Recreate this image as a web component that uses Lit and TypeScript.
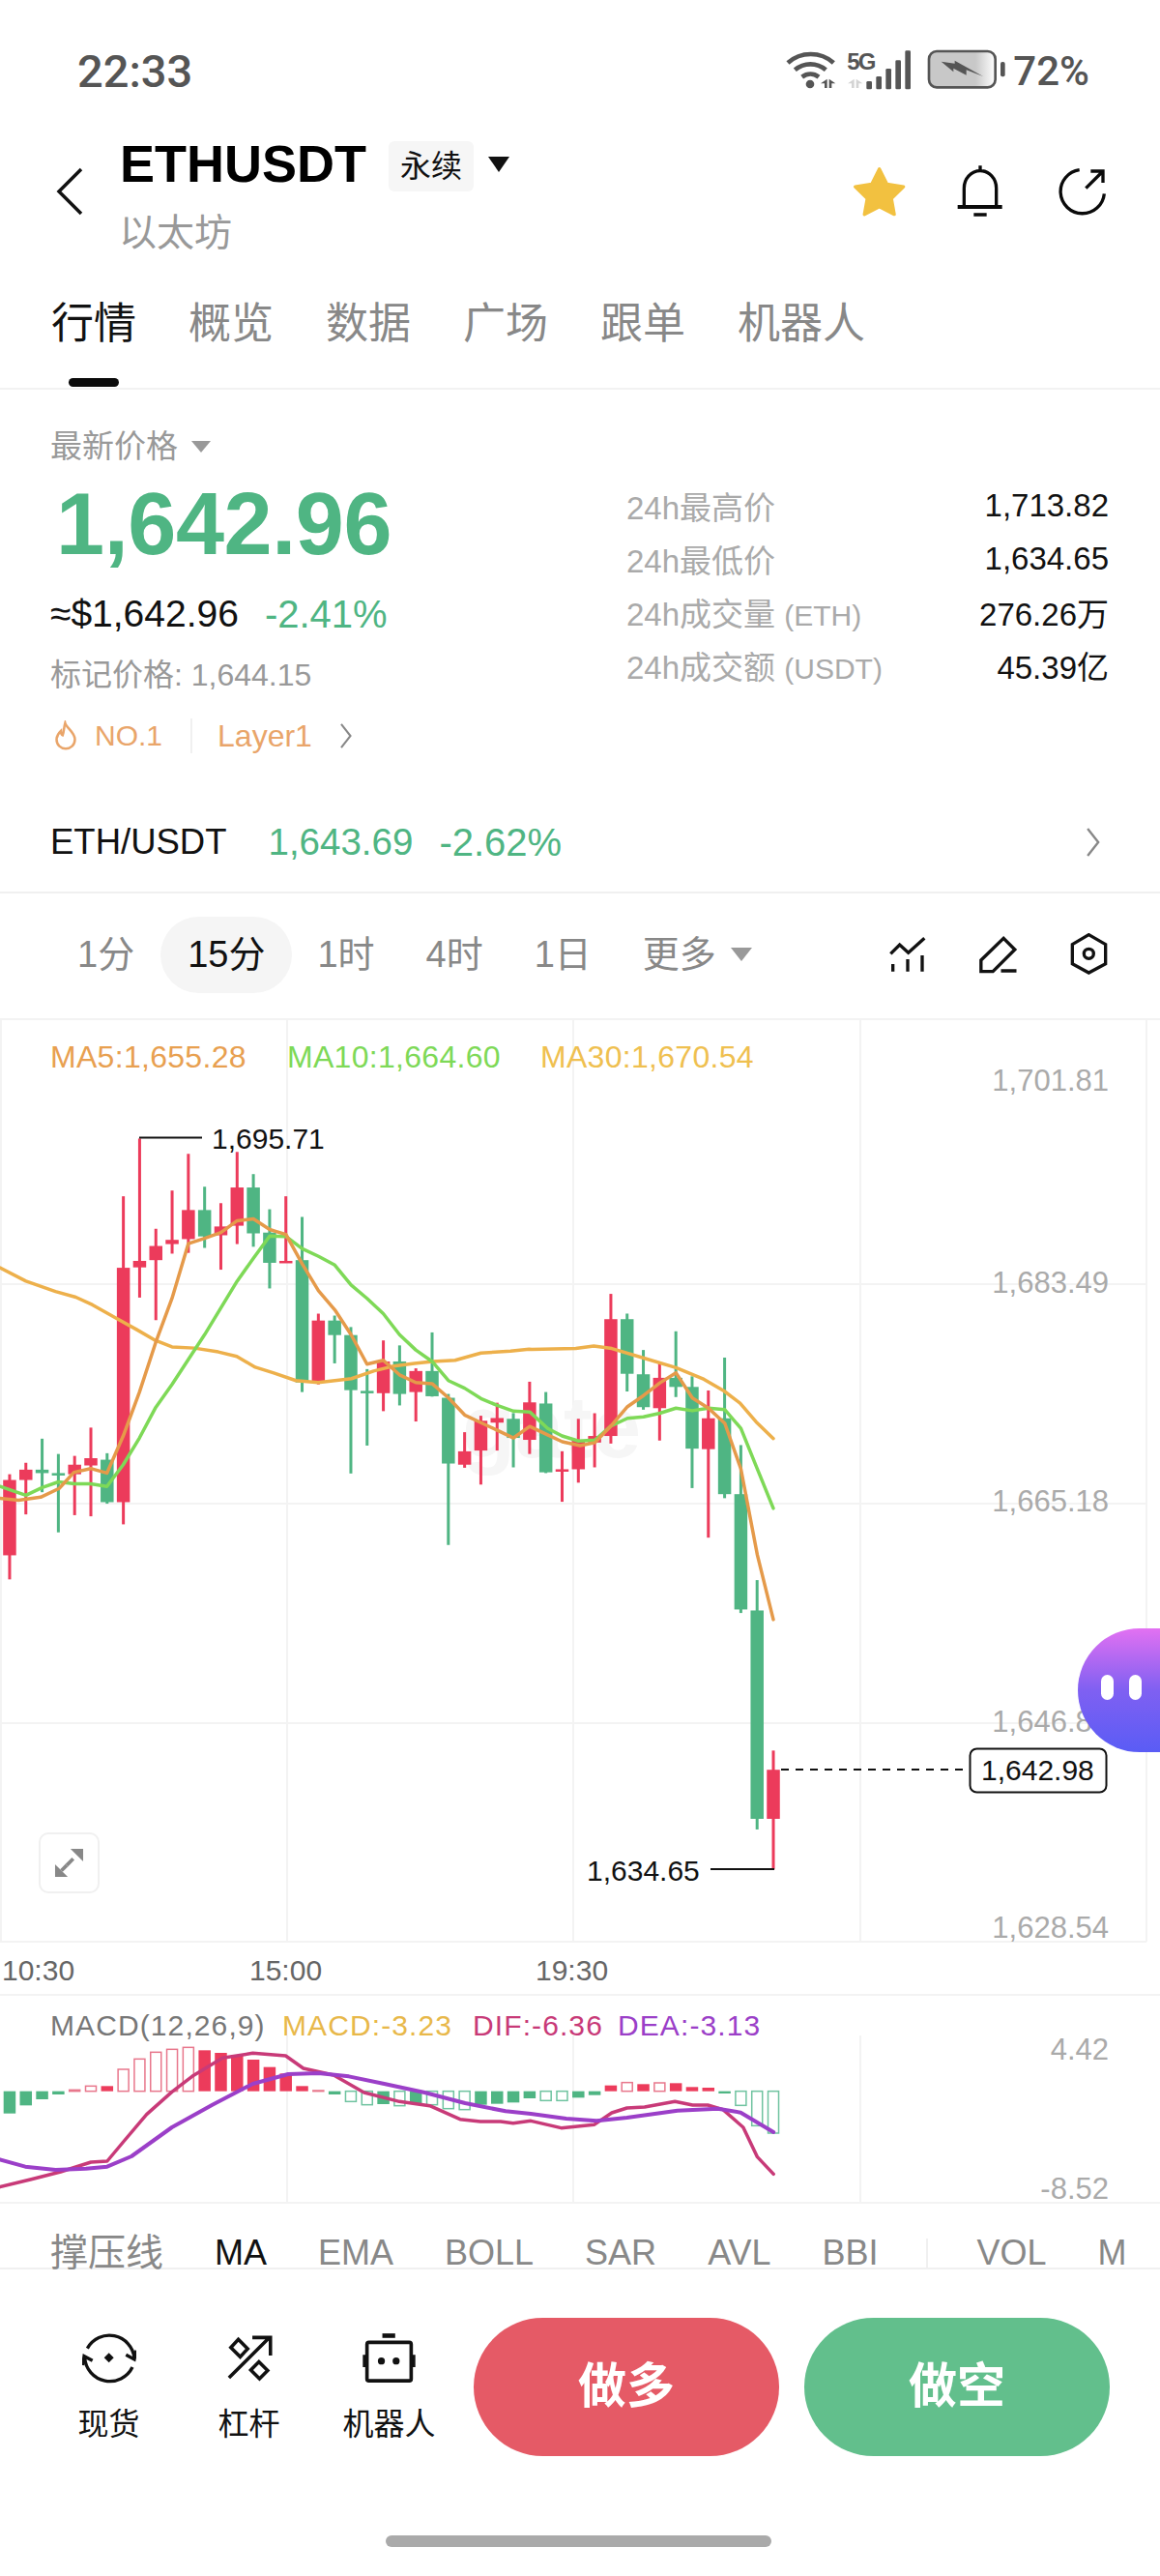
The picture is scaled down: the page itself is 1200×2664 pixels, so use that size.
import {LitElement, css, html, svg} from 'lit';
import {customElement} from 'lit/decorators.js';

const RED = '#ec3b5b';
const GREEN = '#4fb583';

// candles were traced off two crops with different scales, so each set has its own mapping to page px
const ax = (x: number) => x / 2.613;
const ay = (y: number) => 1060 + y / 2.529;
const bx = (x: number) => 550 + x / 2.412;
const by = (y: number) => 1200 + y / 1.912;
const candleX = (i: number) => 9.95 + i * 16.81;

// wick top, wick bottom, body top, body bottom, up?
type Candle = [number, number, number, number, boolean];

const candlesA: Candle[] = [
  [1175, 1450, 1190, 1387, true], [1145, 1280, 1163, 1190, true], [1082, 1222, 1163, 1172, false],
  [1122, 1327, 1172, 1178, false], [1127, 1282, 1150, 1175, true], [1053, 1285, 1133, 1152, true],
  [1120, 1252, 1137, 1248, false], [448, 1306, 635, 1248, true], [297, 713, 617, 634, true],
  [533, 772, 578, 615, true], [433, 598, 562, 573, true], [337, 596, 484, 560, true],
  [423, 583, 484, 553, false], [466, 640, 527, 550, true], [332, 573, 425, 525, true],
  [390, 580, 425, 545, false], [482, 689, 543, 622, false], [448, 622, 617, 622, true],
  [502, 960, 615, 935, false], [755, 940, 773, 932, true], [760, 885, 773, 811, false],
  [790, 1173, 811, 955, false], [900, 1100, 957, 962, false], [825, 1010, 880, 963, true],
  [838, 995, 880, 965, false], [898, 1037, 905, 960, true], [804, 972, 905, 971, false],
  [965, 1360, 975, 1147, false], [1065, 1158, 1115, 1150, true], [1022, 1202, 1035, 1113, true],
  [988, 1113, 1028, 1040, true], [1015, 1157, 1030, 1080, false], [933, 1122, 987, 1085, true],
  [960, 1172, 990, 1170, false], [1115, 1247, 1162, 1168, true], [1030, 1197, 1085, 1162, true],
];
const candlesB: Candle[] = [
  [500, 607, 545, 558, true], [264, 560, 314, 545, true], [303, 457, 314, 422, false],
  [375, 493, 423, 488, false], [400, 554, 430, 490, true], [338, 468, 430, 448, false],
  [427, 648, 448, 570, false], [455, 746, 510, 571, true], [390, 668, 510, 660, false],
  [563, 895, 660, 888, false], [830, 1323, 890, 1302, false], [1167, 1402, 1205, 1302, true],
];

const candles: Candle[] = [
  ...candlesA.map(c => [ay(c[0]), ay(c[1]), ay(c[2]), ay(c[3]), c[4]] as Candle),
  ...candlesB.map(c => [by(c[0]), by(c[1]), by(c[2]), by(c[3]), c[4]] as Candle),
];

const trace = (a: number[][], b: number[][]) =>
  [...a.map(p => `${ax(p[0])},${ay(p[1])}`), ...b.map(p => `${bx(p[0])},${by(p[1])}`)].join(' ');

const ma30 = trace(
  [[0,635],[70,670],[150,697],[205,712],[250,732],[320,770],[370,797],[420,825],[465,842],[525,845],[590,855],[640,867],[690,895],[740,910],[800,930],[860,935],[950,925],[1010,905],[1060,893],[1120,885],[1170,880],[1230,877],[1300,858],[1380,853],[1430,848]],
  [[0,374],[110,372],[155,367],[200,372],[280,391],[360,410],[430,433],[480,456],[520,480],[560,517],[603,550]],
);
const ma5 = trace(
  [[0,1238],[50,1243],[110,1235],[160,1212],[200,1170],[245,1160],[289,1172],[333,1075],[377,960],[421,830],[465,715],[509,572],[553,558],[597,543],[641,512],[685,507],[729,535],[773,548],[817,625],[861,695],[905,745],[949,810],[992,887],[1036,877],[1080,915],[1124,935],[1168,938],[1212,975],[1256,1020],[1300,1040],[1344,1060],[1388,1080],[1432,1050],[1476,1070],[1520,1090],[1568,1100]],
  [[158,558],[198,525],[239,487],[279,465],[320,440],[360,420],[401,470],[441,490],[482,520],[522,610],[563,780],[603,908]],
);
const ma10 = trace(
  [[0,1207],[70,1230],[114,1210],[158,1195],[202,1200],[245,1200],[289,1207],[333,1150],[377,1080],[421,1000],[465,940],[509,875],[553,810],[597,740],[641,670],[685,610],[729,552],[773,553],[817,585],[861,605],[905,628],[949,680],[992,715],[1036,755],[1080,810],[1124,850],[1168,880],[1212,930],[1256,950],[1300,977],[1344,995],[1388,1010],[1432,1012]],
  [[40,530],[76,545],[117,555],[158,553],[198,525],[239,510],[279,507],[320,500],[360,490],[401,495],[441,490],[482,493],[522,530],[563,610],[603,688]],
);

// macd crop: x / 1.912, 2060 + y / 3, zero line at 308
const mx = (x: number) => x / 1.912;
const my = (y: number) => 2060 + y / 3;
const macdBars: [number, boolean][] = [
  [377,false],[352,false],[333,false],[318,false],[304,true],[292,true],[292,false],[240,true],
  [208,true],[187,true],[178,true],[172,true],[181,false],[189,false],[195,false],[210,false],
  [233,false],[253,false],[292,false],[306,true],[318,false],[340,true],[350,true],[348,false],
  [353,true],[345,false],[350,true],[362,true],[365,true],[350,false],[347,false],[343,false],
  [330,false],[337,true],[337,true],[328,false],[320,false],[290,false],[281,true],[286,false],
  [282,true],[283,false],[295,false],[297,false],[315,false],[352,true],[415,true],[438,true],
];
const macdLine = (pts: number[][]) => pts.map(p => `${mx(p[0])},${my(p[1])}`).join(' ');
const dif = macdLine([[0,605],[60,582],[120,558],[180,528],[212,525],[244,465],[290,380],[340,310],[380,262],[440,205],[500,190],[565,198],[600,237],[660,258],[720,312],[790,340],[850,353],[910,395],[950,402],[990,402],[1015,407],[1050,400],[1110,422],[1175,412],[1210,375],[1240,360],[1275,357],[1335,340],[1370,351],[1400,351],[1430,365],[1470,420],[1498,512],[1530,565]]);
const dea = macdLine([[0,520],[50,542],[110,552],[170,548],[212,542],[260,510],[340,420],[420,350],[500,285],[570,255],[630,252],[690,262],[760,285],[840,312],[920,345],[1000,370],[1050,378],[1120,393],[1180,400],[1240,390],[1340,368],[1420,362],[1465,374],[1530,435]]);

@customElement('kline-chart')
export class KlineChart extends LitElement {
  static styles = css`
    :host { display: block; position: relative; height: 1007px; border-bottom: 2px solid #f3f3f3; }
    svg { display: block; }
    text { font-family: "Liberation Sans", sans-serif; font-size: 30px; }
    .axis { fill: #aaaaaa; font-size: 31px; text-anchor: end; }
    .time { fill: #666666; font-size: 30px; }
    .mark { fill: #111111; }
    .legend { font-size: 32px; letter-spacing: 0.3px; }
    .mark-stamp { fill: #f6f6f6; font-size: 90px; font-weight: 700; }
    .expand {
      position: absolute; left: 40px; top: 840px; width: 63px; height: 63px; box-sizing: border-box;
      border: 2px solid #f0f0f0; border-radius: 10px; background: #fff;
    }
    .expand svg { width: 59px; height: 59px; }
    .bubble {
      position: absolute; right: 0; top: 629px; width: 85px; height: 128px;
      border-radius: 64px 0 0 64px; background: linear-gradient(180deg, #e271f2 0%, #7f60f2 50%, #5a5cf5 100%);
      display: flex; gap: 16px; padding: 48px 0 0 24px; box-sizing: border-box;
    }
    .bubble i { width: 13px; height: 26px; border-radius: 7px; background: #fff; }
  `;

  render() {
    return html`
      <svg width="1200" height="1007" viewBox="0 1055 1200 1007">
        <g stroke="#f3f3f3" stroke-width="2">
          ${[1, 297, 593, 890, 1186].map(x => svg`<line x1=${x} x2=${x} y1="1055" y2="2008"></line>`)}
          ${[1328, 1555, 1782, 2008].map(y => svg`<line x1="0" x2="1186" y1=${y} y2=${y}></line>`)}
        </g>
        <text class="mark-stamp" x="478" y="1507">gate</text>
        ${candles.map((c, i) => {
          const fill = c[4] ? RED : GREEN;
          const x = candleX(i);
          return svg`
            <rect x=${x - 1.5} y=${c[0]} width="3" height=${c[1] - c[0]} fill=${fill}></rect>
            <rect x=${x - 6.75} y=${c[2]} width="13.5" height=${Math.max(c[3] - c[2], 2.5)} fill=${fill}></rect>`;
        })}
        <g fill="none" stroke-width="3.5" stroke-linejoin="round" stroke-linecap="round">
          <polyline points=${ma30} stroke="#edb04b"></polyline>
          <polyline points=${ma10} stroke="#7ed957"></polyline>
          <polyline points=${ma5} stroke="#e59a4a"></polyline>
        </g>
        <text class="legend" x="52" y="1104" fill="#e8a050">MA5:1,655.28</text>
        <text class="legend" x="297" y="1104" fill="#7ed957">MA10:1,664.60</text>
        <text class="legend" x="559" y="1104" fill="#efc050">MA30:1,670.54</text>

        <text class="axis" x="1147" y="1128">1,701.81</text>
        <text class="axis" x="1147" y="1337">1,683.49</text>
        <text class="axis" x="1147" y="1563">1,665.18</text>
        <text class="axis" x="1147" y="1791">1,646.86</text>
        <text class="axis" x="1147" y="2004">1,628.54</text>

        <line x1="144" x2="209" y1="1176.5" y2="1176.5" stroke="#111" stroke-width="2"></line>
        <text class="mark" x="219" y="1188">1,695.71</text>
        <line x1="735" x2="801" y1="1933" y2="1933" stroke="#111" stroke-width="2"></line>
        <text class="mark" x="607" y="1945">1,634.65</text>
        <line x1="808" x2="1001" y1="1830" y2="1830" stroke="#111" stroke-width="2" stroke-dasharray="8 7"></line>
        <rect x="1003.5" y="1808.5" width="141" height="45" rx="7" fill="#fff" stroke="#111" stroke-width="2"></rect>
        <text class="mark" x="1015" y="1841">1,642.98</text>

        <text class="time" x="2" y="2048">10:30</text>
        <text class="time" x="258" y="2048">15:00</text>
        <text class="time" x="554" y="2048">19:30</text>
      </svg>
      <div class="expand">
        <svg viewBox="0 0 63 63" fill="#888">
          <path d="M33 16h14v14zM16 33v14h14z"></path>
          <path d="M36 27l-7 7" stroke="#888" stroke-width="4"></path>
          <path d="M23 40l6-6" stroke="#888" stroke-width="4"></path>
        </svg>
      </div>
      <div class="bubble"><i></i><i></i></div>
    `;
  }
}

@customElement('macd-panel')
export class MacdPanel extends LitElement {
  static styles = css`
    :host { display: block; height: 213px; border-bottom: 2px solid #f3f3f3; }
    svg { display: block; }
    text { font-family: "Liberation Sans", sans-serif; font-size: 30px; letter-spacing: 1.1px; }
    .axis { fill: #aaaaaa; text-anchor: end; font-size: 31px; letter-spacing: 0; }
  `;

  render() {
    return html`
      <svg width="1200" height="213" viewBox="0 2064 1200 213">
        <g stroke="#f3f3f3" stroke-width="2">
          ${[297, 593, 890].map(x => svg`<line x1=${x} x2=${x} y1="2105" y2="2277"></line>`)}
        </g>
        <text x="52" y="2105" fill="#777">MACD(12,26,9)</text>
        <text x="292" y="2105" fill="#e8b84a">MACD:-3.23</text>
        <text x="489" y="2105" fill="#c83a78">DIF:-6.36</text>
        <text x="639" y="2105" fill="#9b3fc8">DEA:-3.13</text>
        <text class="axis" x="1147" y="2130">4.42</text>
        <text class="axis" x="1147" y="2274">-8.52</text>
        ${macdBars.map(([z, hollow], i) => {
          const up = z < 308;
          const color = up ? RED : GREEN;
          const top = my(Math.min(z, 308));
          const h = Math.abs(my(z) - my(308));
          const x = candleX(i) - 6.25;
          return hollow
            ? svg`<rect x=${x + 0.75} y=${top} width="11" height=${h} fill="#fff" fill-opacity="0.6" stroke=${up ? '#e8778c' : '#6fc3a0'} stroke-width="1.5"></rect>`
            : svg`<rect x=${x} y=${top} width="12.5" height=${h} fill=${color}></rect>`;
        })}
        <g fill="none" stroke-linejoin="round" stroke-linecap="round">
          <polyline points=${dif} stroke="#c83a78" stroke-width="3.5"></polyline>
          <polyline points=${dea} stroke="#9b3fc8" stroke-width="4"></polyline>
        </g>
      </svg>
    `;
  }
}

const STATUS_ICONS = html`
  <svg class="status-icons" width="227" height="50" viewBox="100 60 681 150" fill="#555">
    <g fill="none" stroke="#555" stroke-width="14">
      <path d="M106 108c40-36 102-36 142 0"></path>
      <path d="M128 130c28-24 68-24 96 0"></path>
      <path d="M150 152c16-12 36-12 52 0"></path>
    </g>
    <circle cx="175" cy="174" r="13"></circle>
    <path d="M208 172l20-14v28h-8v-14zM234 158l20 14h-12v14h-8z"></path>
    <path d="M292 172l20-14v28h-8v-14zM318 158l20 14h-12v14h-8z" fill="#d4d4d4"></path>
    <rect x="350" y="165" width="17" height="25" rx="4"></rect>
    <rect x="380" y="150" width="17" height="40" rx="4"></rect>
    <rect x="410" y="126" width="17" height="64" rx="4"></rect>
    <rect x="440" y="100" width="17" height="90" rx="4"></rect>
    <rect x="470" y="70" width="17" height="120" rx="4"></rect>
    <text x="290" y="129" font-family="Liberation Sans" font-weight="700" font-size="72" letter-spacing="-6">5G</text>
    <defs>
      <linearGradient id="charge"><stop offset="0.7" stop-color="#c8c8c8"></stop><stop offset="1" stop-color="#fff"></stop></linearGradient>
    </defs>
    <rect x="544" y="72" width="206" height="112" rx="24" fill="url(#charge)" stroke="#555" stroke-width="8"></rect>
    <path d="M582 104l42 6v-9l88 49-52-20v16l-40-21v11z"></path>
    <rect x="766" y="105" width="14" height="46" rx="6"></rect>
  </svg>
`;

const ICON_BACK = html`<svg width="30" height="50" viewBox="0 0 30 50" fill="none" stroke="#111" stroke-width="3.5"><path d="M27 2L4 25l23 23"></path></svg>`;
const ICON_STAR = html`<svg width="56" height="54" viewBox="310 420 170 162"><path d="M394 430l24 48 52 8-38 37 9 50-47-24-47 24 9-50-38-37 52-8z" fill="#f2c140" stroke="#f2c140" stroke-width="10" stroke-linejoin="round"></path></svg>`;
const ICON_BELL = html`<svg width="48" height="56" viewBox="638 416 144 168" fill="none" stroke="#0a0a0a" stroke-width="10"><path d="M660 548v-58c0-30 22-54 50-54s50 24 50 54v58"></path><path d="M640 548h138" stroke-width="12"></path><path d="M690 572h40M710 420v14" stroke-width="10"></path></svg>`;
const ICON_SHARE = html`<svg width="50" height="50" viewBox="950 430 150 150" fill="none" stroke="#0a0a0a" stroke-width="10"><path d="M1015 438a68 68 0 1 0 77 74"></path><path d="M1035 495l53-53M1050 442h38v36"></path></svg>`;
const ICON_CHEVRON = (h: number, stroke = '#888') => html`<svg width=${h / 2.1} height=${h} viewBox="0 0 14 30" fill="none" stroke=${stroke} stroke-width="2.4"><path d="M1 1l11 14-11 14"></path></svg>`;
const ICON_FLAME = html`<svg width="24" height="32" viewBox="48 40 76 100" fill="none" stroke="#e9a56a" stroke-width="8"><path d="M84 48c4 16 32 30 32 54 0 18-14 30-30 30s-30-12-30-30c0-12 6-20 14-28 0 8 2 12 6 14 4-10 4-26 8-40z"></path></svg>`;

const ICON_LINES = html`<svg width="40" height="40" viewBox="60 55 120 120" fill="none" stroke="#111" stroke-width="10"><path d="M67 113l28-28 27 25 50-45M74 145v23M120 130v38M165 118v50"></path></svg>`;
const ICON_PEN = html`<svg width="42" height="40" viewBox="340 52 125 120" fill="none" stroke="#111" stroke-width="10"><path d="M348 130l70-68 35 35-68 68h-37zM410 163h48"></path></svg>`;
const ICON_HEX = html`<svg width="40" height="44" viewBox="625 55 120 132" fill="none" stroke="#111" stroke-width="10"><path d="M683 60l52 30v60l-52 28-51-28V90z"></path><circle cx="683" cy="119" r="15"></circle></svg>`;

const ICON_SPOT = html`<svg width="56" height="56" viewBox="70 42 168 168" fill="none" stroke="#111" stroke-width="10"><path d="M86 98a78 78 0 0 1 146 30"></path><path d="M206 118l26 14 6-28"></path><path d="M226 156a78 78 0 0 1-148-30"></path><path d="M102 136l-26-14-4 28" ></path><path d="M153 112l15 15-15 15-15-15z" fill="#111" stroke="none"></path></svg>`;
const ICON_LEVER = html`<svg width="50" height="50" viewBox="510 55 155 150" fill="none" stroke="#111" stroke-width="11"><path d="M522 195L652 66M597 66h58v58"></path><path d="M552 72l30 30-24 26-30-30zM618 144l28 28-26 26-28-28z"></path></svg>`;
const ICON_ROBOT = html`<svg width="57" height="54" viewBox="945 45 172 162" fill="none" stroke="#111" stroke-width="11"><rect x="962" y="79" width="138" height="120" rx="6"></rect><path d="M1010 58h40" stroke-width="14"></path><path d="M954 118v38M1108 118v38" stroke-width="10"></path><circle cx="1007" cy="137" r="11" fill="#111" stroke="none"></circle><circle cx="1053" cy="137" r="11" fill="#111" stroke="none"></circle></svg>`;

@customElement('app-root')
export class AppRoot extends LitElement {
  static styles = css`
    :host {
      display: block; width: 1200px; height: 2664px; overflow: hidden; background: #fff; color: #111;
      font-family: "Liberation Sans", "Noto Sans CJK SC", sans-serif;
    }
    svg { display: block; flex: none; }

    .status { height: 148px; box-sizing: border-box; padding: 0 73px 0 80px; display: flex; align-items: center; color: #555; }
    .time { font: 500 47px/50px Roboto, sans-serif; }
    .status-right { margin-left: auto; display: flex; align-items: center; gap: 8px; }
    .battery-text { font: 500 42px/50px Roboto, sans-serif; }

    .header { height: 122px; box-sizing: border-box; padding: 0 55px 0 57px; display: flex; }
    .back { align-self: center; margin-top: -22px; margin-right: 37px; }
    .title-row { display: flex; align-items: center; height: 42px; }
    .title { font-size: 54px; font-weight: 700; line-height: 42px; color: #000; }
    .chip { margin: 6px 0 0 23px; padding: 0 12px; height: 52px; line-height: 52px; font-size: 32px; background: #f6f6f6; border-radius: 6px; }
    .caret { width: 0; height: 0; border-style: solid; border-color: #111 transparent transparent; border-width: 16px 11px 0; margin: 2px 0 0 15px; }
    .sub { margin: 32px 0 0 -1px; font-size: 39px; line-height: 38px; color: #999; }
    .actions { margin-left: auto; display: flex; align-items: center; margin-top: -22px; }
    .actions .bell { margin-left: 52px; }
    .actions .share { margin-left: 57px; }

    .tabs { height: 133px; box-sizing: border-box; padding: 43px 0 0 53px; display: flex; gap: 54px; border-bottom: 2px solid #f2f2f2; }
    .tab { position: relative; font-size: 44px; line-height: 44px; color: #888; height: 44px; }
    .tab.on { color: #111; }
    .tab.on::after { content: ""; position: absolute; left: 18px; top: 78px; width: 52px; height: 9px; border-radius: 5px; background: #0a0a0a; }

    .quote { height: 417px; display: flex; }
    .quote-left { width: 596px; padding-left: 52px; box-sizing: border-box; }
    .price-label { margin-top: 39px; height: 40px; line-height: 40px; font-size: 33px; color: #999; display: flex; align-items: center; gap: 14px; }
    .caret-gray { width: 0; height: 0; border-style: solid; border-color: #999 transparent transparent; border-width: 12px 10px 0; }
    .price { margin-top: 9px; height: 102px; line-height: 102px; font-size: 90px; font-weight: 700; color: #4fb583; letter-spacing: -0.4px; padding-left: 6px; }
    .usd { margin-top: 20px; height: 44px; line-height: 44px; font-size: 39px; display: flex; gap: 27px; }
    .usd .up { font-size: 40px; }
    .up { color: #4fb583; }
    .mark-price { margin-top: 21px; height: 40px; line-height: 40px; font-size: 32px; color: #999; }
    .tags { margin-top: 23px; height: 40px; display: flex; align-items: center; color: #e9a56a; font-size: 32px; padding-left: 4px; }
    .tags .no { margin-left: 18px; font-size: 30px; }
    .tags .sep { width: 2px; height: 36px; background: #f0f0f0; margin: 0 26px 0 29px; }
    .tags .more { margin-left: 29px; }

    .stats { flex: 1; padding: 92px 53px 0 52px; box-sizing: border-box; }
    .stat { height: 55px; display: flex; align-items: center; justify-content: space-between; font-size: 33px; }
    .stat span:first-child { font-size: 33px; color: #aaa; }
    .stat small { font-size: 30px; }

    .spot { height: 104px; box-sizing: border-box; padding: 0 62px 0 52px; display: flex; align-items: center; font-size: 38.5px; border-bottom: 2px solid #f0f0f0; }
    .spot .name { font-size: 36.5px; margin-right: 43px; }
    .spot .val { margin-right: 27px; }
    .spot .pct { font-size: 40px; }
    .spot svg { margin-left: auto; }

    .periods { height: 131px; box-sizing: border-box; padding: 0 53px 3px 80px; display: flex; align-items: center; gap: 53px; font-size: 38px; line-height: 79px; color: #888; border-bottom: 2px solid #f3f3f3; }
    .period.on { color: #111; background: #f5f5f5; border-radius: 40px; padding: 0 28px; margin: 0 -27px 0 -26px; height: 79px; }
    .period.more { display: flex; align-items: center; gap: 15px; }
    .caret-more { width: 0; height: 0; border-style: solid; border-color: #999 transparent transparent; border-width: 14px 11px 0; }
    .tools { margin-left: auto; display: flex; align-items: center; gap: 53px; }

    .indicators { height: 66px; box-sizing: content-box; border-bottom: 2px solid #f0f0f0; display: flex; padding: 0 0 0 52px; gap: 53px; font-size: 36px; color: #888; white-space: nowrap; align-items: flex-start; }
    .indicators span { flex: none; margin-top: 36px; line-height: 30px; }
    .indicators .lead { font-size: 39px; }
    .indicators .on { color: #111; }
    .indicators .sep { width: 2px; height: 30px; background: #f0f0f0; margin-left: -4px; margin-right: -2px; }

    .bottom { height: 317px; box-sizing: border-box; padding: 50px 52px 0 40px; }
    .bar { display: flex; align-items: flex-start; }
    .tool { width: 145px; display: flex; flex-direction: column; align-items: center; padding-top: 14px; font-size: 32px; line-height: 40px; }
    .tool .ico { height: 54px; display: flex; align-items: center; margin-bottom: 22px; }
    .trade { width: 316px; height: 143px; border-radius: 72px; color: #fff; font-size: 50px; font-weight: 700; text-align: center; line-height: 143px; }
    .long { background: #e55a66; margin-left: 15px; }
    .short { background: #62bf8c; margin-left: 26px; }
    .home { width: 399px; height: 12px; border-radius: 6px; background: #aaa; margin: 82px 0 0 359px; }
  `;

  render() {
    return html`
      <div class="status">
        <span class="time">22:33</span>
        <div class="status-right">${STATUS_ICONS}<span class="battery-text">72%</span></div>
      </div>

      <div class="header">
        <div class="back">${ICON_BACK}</div>
        <div>
          <div class="title-row">
            <span class="title">ETHUSDT</span>
            <span class="chip">永续</span>
            <span class="caret"></span>
          </div>
          <div class="sub">以太坊</div>
        </div>
        <div class="actions">
          ${ICON_STAR}
          <span class="bell">${ICON_BELL}</span>
          <span class="share">${ICON_SHARE}</span>
        </div>
      </div>

      <div class="tabs">
        ${['行情', '概览', '数据', '广场', '跟单', '机器人'].map((t, i) => html`<div class="tab ${i === 0 ? 'on' : ''}">${t}</div>`)}
      </div>

      <div class="quote">
        <div class="quote-left">
          <div class="price-label">最新价格<span class="caret-gray"></span></div>
          <div class="price">1,642.96</div>
          <div class="usd"><span>≈$1,642.96</span><span class="up">-2.41%</span></div>
          <div class="mark-price">标记价格: 1,644.15</div>
          <div class="tags">
            ${ICON_FLAME}<span class="no">NO.1</span><span class="sep"></span><span>Layer1</span>
            <span class="more">${ICON_CHEVRON(26)}</span>
          </div>
        </div>
        <div class="stats">
          <div class="stat"><span>24h最高价</span><span>1,713.82</span></div>
          <div class="stat"><span>24h最低价</span><span>1,634.65</span></div>
          <div class="stat"><span>24h成交量 <small>(ETH)</small></span><span>276.26万</span></div>
          <div class="stat"><span>24h成交额 <small>(USDT)</small></span><span>45.39亿</span></div>
        </div>
      </div>

      <div class="spot">
        <span class="name">ETH/USDT</span>
        <span class="val up">1,643.69</span>
        <span class="up pct">-2.62%</span>
        ${ICON_CHEVRON(30)}
      </div>

      <div class="periods">
        <span>1分</span>
        <span class="period on">15分</span>
        <span>1时</span>
        <span>4时</span>
        <span>1日</span>
        <span class="period more">更多<span class="caret-more"></span></span>
        <div class="tools">${ICON_LINES}${ICON_PEN}${ICON_HEX}</div>
      </div>

      <kline-chart></kline-chart>
      <macd-panel></macd-panel>

      <div class="indicators">
        <span class="lead">撑压线</span>
        <span class="on">MA</span>
        <span>EMA</span>
        <span>BOLL</span>
        <span>SAR</span>
        <span>AVL</span>
        <span>BBI</span>
        <span class="sep"></span>
        <span>VOL</span>
        <span>M</span>
      </div>

      <div class="bottom">
        <div class="bar">
          <div class="tool"><span class="ico">${ICON_SPOT}</span>现货</div>
          <div class="tool"><span class="ico">${ICON_LEVER}</span>杠杆</div>
          <div class="tool"><span class="ico">${ICON_ROBOT}</span>机器人</div>
          <div class="trade long">做多</div>
          <div class="trade short">做空</div>
        </div>
        <div class="home"></div>
      </div>
    `;
  }
}
